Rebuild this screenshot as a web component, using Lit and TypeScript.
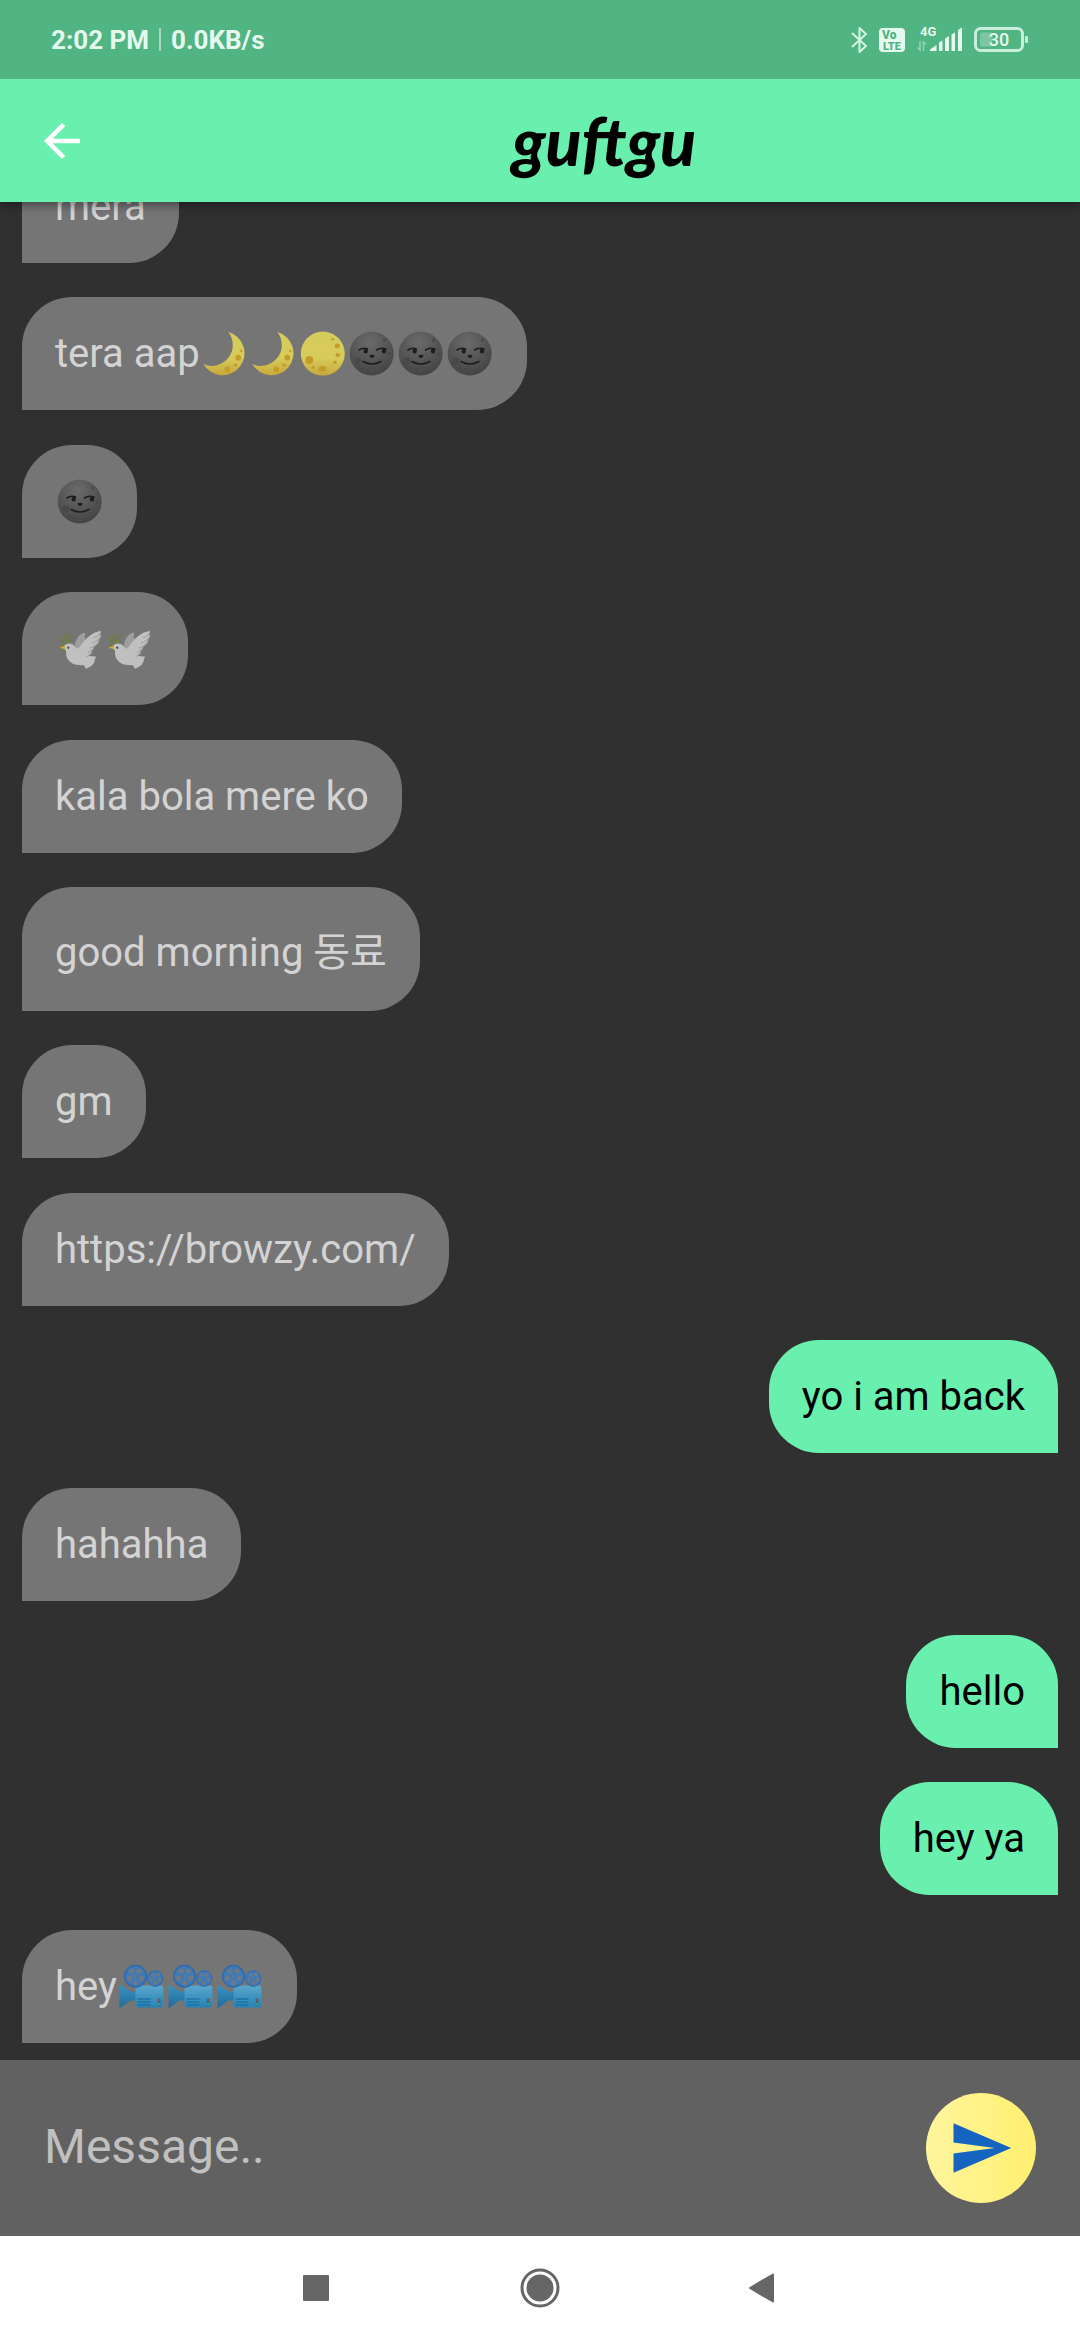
import { LitElement, html, svg, css, TemplateResult } from "lit";
import { customElement, property } from "lit/decorators.js";
import { classMap } from "lit/directives/class-map.js";

interface Message {
  text: string;
  mine?: boolean;
}

const MESSAGES: Message[] = [
  { text: "mera" },
  { text: "tera aap🌙🌙🌕🌚🌚🌚" },
  { text: "🌚" },
  { text: "🕊️🕊️" },
  { text: "kala bola mere ko" },
  { text: "good morning 동료" },
  { text: "gm" },
  { text: "https://browzy.com/" },
  { text: "yo i am back", mine: true },
  { text: "hahahha" },
  { text: "hello", mine: true },
  { text: "hey ya", mine: true },
  { text: "hey🎥🎥🎥" },
];

const moonFill = svg`
  <linearGradient id="moon" x1="0" y1="0" x2="0" y2="1">
    <stop offset="0" stop-color="#d5cb5e" />
    <stop offset="0.6" stop-color="#d7cb5a" />
    <stop offset="1" stop-color="#c7a83b" />
  </linearGradient>`;

// A film reel: a disc with five round holes about its hub.
const reel = (cx: number, cy: number, r: number) => svg`
  <circle cx=${cx} cy=${cy} r=${r} fill="#3f7ab8" />
  <circle cx=${cx} cy=${cy} r=${r * 0.93} fill="none" stroke="#3469a5" stroke-width=${r * 0.12} />
  ${[0, 1, 2, 3, 4].map((i) => {
    const a = ((36 + i * 72 - 90) * Math.PI) / 180;
    return svg`<circle cx=${cx + Math.cos(a) * r * 0.55} cy=${cy + Math.sin(a) * r * 0.55} r=${r * 0.23} fill="#6d7985" />`;
  })}
  <circle cx=${cx} cy=${cy} r=${r * 0.13} fill="#6d7985" />`;

// Emoji drawn in the app's own style; the rest fall back to the emoji font.
const EMOJI: Record<string, { label: string; art: TemplateResult<2> }> = {
  "🌙": {
    label: "crescent moon",
    art: svg`${moonFill}
      <path d="M28.3 1A22 22 0 1 1 3.3 33A20.900 20.900 0 0 0 28.3 1Z" fill="url(#moon)" />
      <g fill="#c39d28">
        <circle cx="38.3" cy="26.7" r="2.900" />
        <circle cx="27.3" cy="38.3" r="2.900" />
        <ellipse cx="35.3" cy="34" rx="2" ry="1.500" />
        <circle cx="41.3" cy="20" r="1.200" />
      </g>`,
  },
  "🌕": {
    label: "full moon",
    art: svg`${moonFill}
      <circle cx="24.800" cy="22.600" r="22" fill="url(#moon)" />
      <g fill="#c39d28">
        <circle cx="11.3" cy="29" r="3.900" />
        <ellipse cx="24.3" cy="37.700" rx="3.900" ry="2.700" />
        <circle cx="15.3" cy="36.3" r="1.600" />
        <circle cx="39.3" cy="15" r="2.500" />
        <circle cx="34.700" cy="8.3" r="1.400" />
        <ellipse cx="39.700" cy="24" rx="2.300" ry="2" />
        <circle cx="37" cy="31.3" r="1.800" />
      </g>`,
  },
  "🌚": {
    label: "new moon face",
    art: svg`
      <radialGradient id="dark" cx="0.45" cy="0.25" r="0.75">
        <stop offset="0" stop-color="#6b6b6b" />
        <stop offset="1" stop-color="#444" />
      </radialGradient>
      <circle cx="24.700" cy="22.500" r="22" fill="url(#dark)" />
      <g fill="#484848">
        <circle cx="10.700" cy="30" r="3.500" />
        <circle cx="21" cy="39" r="2" />
        <circle cx="15" cy="37" r="1.500" />
        <circle cx="37.500" cy="9" r="1.500" />
        <circle cx="42" cy="23" r="1.500" />
        <circle cx="39" cy="36" r="1.500" />
      </g>
      <g fill="none" stroke="#1d1d1d" stroke-width="1.600" stroke-linecap="round">
        <path d="M12 19Q16 16 20.500 18" />
        <path d="M29.500 19Q33.500 16 39 18" />
        <path d="M16 30.500Q25 35.500 34 30.500" />
      </g>
      <g fill="#1d1d1d">
        <ellipse cx="18.700" cy="20" rx="2.200" ry="2.600" />
        <ellipse cx="37" cy="20" rx="2.200" ry="2.600" />
        <path d="M22.3 24.500Q25 23 27.700 24.500Q26.500 27 25 27Q23.500 27 22.3 24.500Z" />
      </g>`,
  },
  "🎥": {
    label: "movie camera",
    art: svg`
      <linearGradient id="body" x1="0" y1="0" x2="0" y2="1">
        <stop offset="0" stop-color="#5ba6cb" />
        <stop offset="1" stop-color="#2683b5" />
      </linearGradient>
      <linearGradient id="horn" x1="0" y1="0" x2="0" y2="1">
        <stop offset="0" stop-color="#3594c2" />
        <stop offset="1" stop-color="#24699a" />
      </linearGradient>
      <path d="M2.500 20.500L13.500 27.500H19V36.500H13.500L2.500 44.500Z" fill="url(#horn)" />
      <rect x="18.500" y="21.500" width="28" height="22" rx="3" fill="url(#body)" />
      ${reel(18.5, 12.2, 11.5)} ${reel(38.3, 14.5, 8.2)}
      <path d="M20.500 35H33.500M20.500 38H33.500M20.500 41H33.500" stroke="#2172a4" stroke-width="1.600" />
      <rect x="40.800" y="34.500" width="2.600" height="7" fill="#2c6484" />
      <circle cx="42.100" cy="36.200" r="1.100" fill="#b04848" />
      <circle cx="42.100" cy="39.800" r="1.100" fill="#4fae62" />`,
  },
};

@customElement("status-bar")
export class StatusBar extends LitElement {
  static styles = css`
    :host {
      display: flex;
      align-items: center;
      justify-content: space-between;
      height: 79px;
      padding: 0 51px;
      background: #51b483;
      color: #e6f9ef;
      font-family: Roboto, sans-serif;
    }
    .left,
    .right {
      display: flex;
      align-items: center;
    }
    .left {
      gap: 10px;
      font-size: 26px;
      line-height: 30px;
      font-weight: 700;
    }
    .rule {
      width: 2px;
      height: 23px;
      background: #a3dabf;
    }
    .right {
      gap: 11px;
    }
    svg {
      display: block;
      height: 32px;
    }
    text {
      font-family: Roboto, sans-serif;
    }
  `;

  render() {
    return html`
      <div class="left">
        <span>2:02 PM</span>
        <span class="rule"></span>
        <span>0.0KB/s</span>
      </div>
      <div class="right">
        <svg width="17" viewBox="0 -2 17 32" role="img" aria-label="Bluetooth">
          <path d="M1 7L15 20L8.500 26V2L15 8L1 21" fill="none" stroke="#d5f3e4" stroke-width="2" stroke-linejoin="round" />
        </svg>
        <svg width="27" viewBox="0 -2 27 32" role="img" aria-label="VoLTE">
          <rect x="0" y="2" width="26" height="24" rx="4" fill="#e6f9ef" />
          <text x="3" y="13" font-size="12" font-weight="900" fill="#51b483">Vo</text>
          <text x="4" y="24" font-size="11" font-weight="900" fill="#51b483">LTE</text>
        </svg>
        <svg width="46" viewBox="0 -2 46 32" role="img" aria-label="Signal strength">
          <text x="3" y="10" font-size="13" font-weight="700" fill="#e6f9ef">4G</text>
          <path d="M3 15V24L0.500 21.500M6.500 25V16L9 18.500" fill="none" stroke="#93d3b3" stroke-width="1.500" />
          <path d="M13 25V23.500L19.500 19V25ZM22 25V16.500L25.500 14.500V25ZM28 25V12.500L32 10V25ZM34.500 25V8.500L38 6.500V25ZM41 25V4L45 1.500V25Z" fill="#e6f9ef" />
        </svg>
        <svg width="55" viewBox="0 -2 55 32" role="img" aria-label="Battery 30 percent">
          <rect x="1.500" y="2.500" width="47" height="22" rx="5" fill="none" stroke="#c8eedb" stroke-width="3" />
          <path d="M6 8.500a2 2 0 0 1 2-2H18V20.500H8a2 2 0 0 1-2-2Z" fill="#7cc7a2" />
          <rect x="51" y="10" width="3" height="7" rx="1" fill="#c8eedb" />
          <text x="25" y="20" font-size="18" font-weight="500" text-anchor="middle" fill="#e6f9ef">30</text>
        </svg>
      </div>
    `;
  }
}

@customElement("chat-bubble")
export class ChatBubble extends LitElement {
  @property() text = "";
  @property({ type: Boolean }) mine = false;

  static styles = css`
    :host {
      display: flex;
    }
    .bubble {
      margin: 0;
      padding: 33px;
      border-radius: 50px 50px 50px 0;
      background: #757575;
      color: rgba(255, 255, 255, 0.7);
      font-family: Roboto, "Noto Sans CJK KR", "Noto Color Emoji", sans-serif;
      font-size: 40px;
      line-height: normal;
      overflow-wrap: anywhere;
    }
    .mine {
      margin-left: auto;
      border-radius: 50px 50px 0 50px;
      background: #69f0ae;
      color: #000;
    }
    .emoji {
      width: 49px;
      height: 46px;
      vertical-align: -10px;
    }
  `;

  private parts() {
    return this.text.split(/(🌙|🌕|🌚|🎥)/u).map((part) => {
      const emoji = EMOJI[part];
      return emoji
        ? html`<svg class="emoji" viewBox="0 0 49 46" role="img" aria-label=${emoji.label}>${emoji.art}</svg>`
        : part;
    });
  }

  render() {
    return html`<p class=${classMap({ bubble: true, mine: this.mine })}>${this.parts()}</p>`;
  }
}

@customElement("app-root")
export class AppRoot extends LitElement {
  static styles = css`
    :host {
      display: flex;
      flex-direction: column;
      min-height: 100vh;
      background: #303030;
      font-family: Roboto, "Noto Sans", sans-serif;
    }
    button {
      display: grid;
      place-items: center;
      margin: 0;
      padding: 0;
      border: 0;
      background: none;
    }
    svg {
      display: block;
    }
    .top {
      position: relative;
      z-index: 1;
      box-shadow: 0 2px 10px rgba(0, 0, 0, 0.5);
    }
    .appbar {
      display: flex;
      align-items: center;
      gap: 4px;
      height: 123px;
      background: #69f0ae;
    }
    .back {
      width: 124px;
      height: 123px;
    }
    .title {
      flex: 1;
      margin: 0;
      color: #000;
      font-family: Lato, sans-serif;
      font-size: 66px;
      line-height: 72px;
      font-style: italic;
      font-weight: 900;
      text-align: center;
    }
    .thread {
      flex: 1;
      display: flex;
      flex-direction: column;
      justify-content: space-between;
      gap: 34px;
      margin: -52px 0 0;
      padding: 0 22px 17px;
      list-style: none;
    }
    .composer {
      position: relative;
      display: flex;
      align-items: center;
      gap: 44px;
      height: 176px;
      padding: 0 44px;
      background: #616161;
    }
    .field {
      flex: 1;
      min-width: 0;
      height: 110px;
      padding: 0 0 4px;
      box-sizing: border-box;
      border: 0;
      outline: 0;
      background: none;
      color: #fff;
      font-family: Roboto, sans-serif;
      font-size: 48px;
    }
    .field::placeholder {
      color: #c0c0c0;
      opacity: 1;
    }
    .send {
      width: 110px;
      height: 110px;
      border-radius: 50%;
      background: linear-gradient(90deg, #fff59d, #ffef70);
    }
    .nav {
      display: flex;
      justify-content: center;
      height: 104px;
      background: #fff;
    }
    .nav button {
      width: 224px;
      height: 104px;
    }
  `;

  render() {
    return html`
      <header class="top">
        <status-bar></status-bar>
        <div class="appbar">
          <button class="back" aria-label="Back">
            <svg width="54" height="54" viewBox="0 0 24 24" fill="#fff">
              <path d="M20 11H7.830l5.590-5.590L12 4l-8 8 8 8 1.410-1.410L7.830 13H20v-2z" />
            </svg>
          </button>
          <h1 class="title">guftgu</h1>
        </div>
      </header>
      <ul class="thread">
        ${MESSAGES.map(
          (m) => html`<li><chat-bubble .text=${m.text} .mine=${m.mine ?? false}></chat-bubble></li>`
        )}
      </ul>
      <form class="composer" @submit=${(e: Event) => e.preventDefault()}>
        <input class="field" type="text" placeholder="Message.." aria-label="Message" />
        <button class="send" aria-label="Send">
          <svg width="66" height="66" viewBox="0 0 24 24" fill="#1565c0">
            <path d="M2.010 21L23 12 2.010 3 2 10l15 2-15 2z" />
          </svg>
        </button>
      </form>
      <nav class="nav" aria-label="System navigation">
        <button aria-label="Recent apps">
          <svg width="48" height="48" viewBox="0 0 48 48" fill="#666">
            <rect x="11" y="11" width="26" height="26" rx="1" />
          </svg>
        </button>
        <button aria-label="Home">
          <svg width="48" height="48" viewBox="0 0 48 48" fill="#666">
            <circle cx="24" cy="24" r="18" fill="none" stroke="#666" stroke-width="3" />
            <circle cx="24" cy="24" r="13.500" />
          </svg>
        </button>
        <button aria-label="Back">
          <svg width="48" height="48" viewBox="0 0 48 48" fill="#666" stroke="#666" stroke-width="2" stroke-linejoin="round">
            <path d="M10 24L33 10.500V37.500Z" />
          </svg>
        </button>
      </nav>
    `;
  }
}
